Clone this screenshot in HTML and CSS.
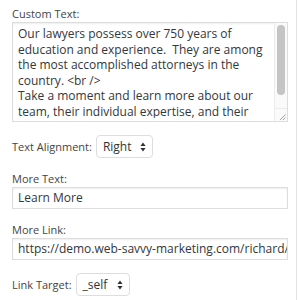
FILE: index.html
```html
<!DOCTYPE html>
<html>
<head>
<meta charset="utf-8">
<link rel="stylesheet" href="styles.css">
</head>
<body>
<div class="panel">
  <div class="field">
    <label class="label">Custom Text:</label>
    <div class="area-box">
      <textarea class="area">Our lawyers possess over 750 years of education and experience.  They are among the most accomplished attorneys in the country. &lt;br /&gt;
Take a moment and learn more about our team, their individual expertise, and their commitment to providing excellent legal service to every client.</textarea>
      <div class="scroll">
        <div class="track"><div class="thumb"></div></div>
        <div class="grip">
          <svg width="10" height="11" viewBox="0 0 10 11"><path d="M8.5 4.5 L3 10 M8.5 7.5 L6 10" stroke="#999" stroke-width="0.9"/></svg>
        </div>
      </div>
    </div>
  </div>
  <div class="field inline">
    <label class="label">Text Alignment:</label>
    <div class="select sel-align"><span>Right</span>
      <svg width="6" height="10" viewBox="0 0 6 10"><path d="M3 0.5 L5.6 4 L0.4 4 Z M3 9.5 L5.6 6 L0.4 6 Z" fill="#333"/></svg>
    </div>
  </div>
  <div class="field">
    <label class="label">More Text:</label>
    <div class="input">Learn More</div>
  </div>
  <div class="field">
    <label class="label">More Link:</label>
    <div class="input">https://demo.web-savvy-marketing.com/richard/about/</div>
  </div>
  <div class="field inline">
    <label class="label">Link Target:</label>
    <div class="select sel-target"><span>_self</span>
      <svg width="6" height="10" viewBox="0 0 6 10"><path d="M3 0.5 L5.6 4 L0.4 4 Z M3 9.5 L5.6 6 L0.4 6 Z" fill="#333"/></svg>
    </div>
  </div>
</div>
</body>
</html>
```
FILE: styles.css
```css
html, body {
  margin: 0;
  padding: 0;
  background: #fff;
}
body {
  font-family: "Open Sans", "Liberation Sans", sans-serif;
  color: #444;
}
.panel {
  width: 297px;
  height: 300px;
  box-sizing: border-box;
  border-right: 1px solid #e3e3e3;
  padding: 6px 0 0 12px;
}
.field {
  display: flex;
  flex-direction: column;
  width: 276px;
}
.label {
  font-size: 11px;
  line-height: 16px;
  color: #444;
}
.area-box {
  box-sizing: border-box;
  width: 276px;
  height: 100px;
  border: 1px solid #ddd;
  display: flex;
  align-items: flex-start;
  box-shadow: inset 0 1px 2px rgba(0,0,0,0.07);
}
.area {
  flex: 1;
  min-width: 0;
  height: 95px;
  box-sizing: border-box;
  border: none;
  margin: 0;
  padding: 3px 5px 0 5px;
  background: transparent;
  font-family: "Open Sans", "Liberation Sans", sans-serif;
  font-size: 12px;
  line-height: 15.5px;
  color: #32373c;
  resize: none;
  overflow: hidden;
  outline: none;
}
.scroll {
  align-self: stretch;
  width: 12px;
  display: flex;
  flex-direction: column;
  border-left: 1px solid #ececec;
  background: #fafafa;
}
.track {
  flex: 1;
  padding: 2px 2px 0 2px;
}
.thumb {
  height: 70px;
  background: #c4c4c4;
  border-radius: 4px;
}
.grip {
  height: 12px;
  border-top: 1px solid #ececec;
  display: flex;
  align-items: flex-end;
  justify-content: flex-end;
}
.grip svg {
  display: block;
}
.inline {
  flex-direction: row;
  align-items: center;
  gap: 4px;
}
.select {
  box-sizing: border-box;
  height: 23px;
  border: 1px solid #ddd;
  border-radius: 4px;
  display: flex;
  align-items: center;
  justify-content: space-between;
  padding: 0 6px;
  font-size: 12px;
  color: #333;
}
.sel-align {
  width: 57px;
}
.sel-target {
  width: 54px;
}
.input {
  box-sizing: border-box;
  height: 22px;
  border: 1px solid #ddd;
  padding: 0 5px;
  font-size: 12px;
  line-height: 20px;
  color: #32373c;
  white-space: nowrap;
  overflow: hidden;
  box-shadow: inset 0 1px 2px rgba(0,0,0,0.07);
}
.field + .field {
  margin-top: 13px;
}
```
